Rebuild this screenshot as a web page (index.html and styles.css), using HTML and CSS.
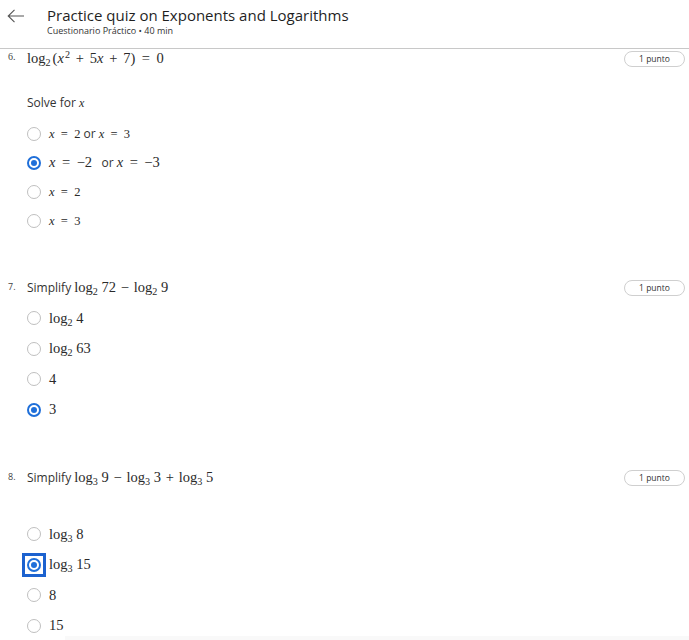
FILE: index.html
```html
<!DOCTYPE html>
<html lang="es">
<head>
<meta charset="utf-8">
<title>Practice quiz on Exponents and Logarithms</title>
<link rel="stylesheet" href="styles.css">
</head>
<body>
<header class="top">
  <button class="back" aria-label="Volver">
    <svg width="18" height="14" viewBox="0 0 18 14"><path d="M17 7H1.2M7.5 0.8L1.2 7l6.3 6.2" fill="none" stroke="#555" stroke-width="1.1"/></svg>
  </button>
  <div class="titles">
    <h1 class="title">Practice quiz on Exponents and Logarithms</h1>
    <div class="sub">Cuestionario Práctico • 40 min</div>
  </div>
</header>

<main class="quiz">
  <section class="q q6">
    <div class="qhead">
      <span class="num serifnum">6.</span>
      <span class="prompt m big">log<sub>2</sub><span class="thin"></span>(<i>x</i><sup>2</sup><span class="bin">+</span>5<i>x</i><span class="bin">+</span>7)<span class="rel">=</span>0</span>
      <span class="pts">1 punto</span>
    </div>
    <div class="solve">Solve for <i class="m">x</i></div>
    <div class="opts r29">
      <label class="opt"><span class="radio"></span><span class="lbl"><span class="m sm"><i>x</i><span class="rel">=</span>2</span> or <span class="m sm"><i>x</i><span class="rel">=</span>3</span></span></label>
      <label class="opt"><span class="radio on"></span><span class="lbl"><span class="m md"><i>x</i><span class="rel">=</span>−2</span>&nbsp;&nbsp; or <span class="m md"><i>x</i><span class="rel">=</span>−3</span></span></label>
      <label class="opt"><span class="radio"></span><span class="lbl"><span class="m sm"><i>x</i><span class="rel">=</span>2</span></span></label>
      <label class="opt"><span class="radio"></span><span class="lbl"><span class="m sm"><i>x</i><span class="rel">=</span>3</span></span></label>
    </div>
  </section>

  <section class="q q7">
    <div class="qhead">
      <span class="num">7.</span>
      <span class="prompt">Simplify <span class="m big">log<sub>2</sub> 72<span class="bin">−</span>log<sub>2</sub> 9</span></span>
      <span class="pts">1 punto</span>
    </div>
    <div class="opts r30">
      <label class="opt"><span class="radio"></span><span class="lbl m big">log<sub>2</sub> 4</span></label>
      <label class="opt"><span class="radio"></span><span class="lbl m big">log<sub>2</sub> 63</span></label>
      <label class="opt"><span class="radio"></span><span class="lbl m big">4</span></label>
      <label class="opt"><span class="radio on"></span><span class="lbl m big">3</span></label>
    </div>
  </section>

  <section class="q q8">
    <div class="qhead">
      <span class="num">8.</span>
      <span class="prompt">Simplify <span class="m big">log<sub>3</sub> 9<span class="bin">−</span>log<sub>3</sub> 3<span class="bin">+</span>log<sub>3</sub> 5</span></span>
      <span class="pts">1 punto</span>
    </div>
    <div class="opts r30">
      <label class="opt"><span class="radio"></span><span class="lbl m big">log<sub>3</sub> 8</span></label>
      <label class="opt"><span class="focus"><span class="radio on"></span></span><span class="lbl m big">log<sub>3</sub> 15</span></label>
      <label class="opt"><span class="radio"></span><span class="lbl m big">8</span></label>
      <label class="opt"><span class="radio"></span><span class="lbl m big">15</span></label>
    </div>
  </section>
</main>
<div class="footshade"></div>
</body>
</html>
```

FILE: styles.css
```css
* { box-sizing: border-box; }
html, body { margin: 0; padding: 0; background: #fff; }
body {
  font-family: "Open Sans", "Liberation Sans", sans-serif;
  color: #333;
  width: 689px;
  height: 640px;
  overflow: hidden;
}

.top {
  height: 49px;
  border-bottom: 1px solid #c8c8c8;
  display: flex;
  align-items: flex-start;
}
.back {
  border: 0;
  background: none;
  padding: 0;
  margin: 9px 0 0 7px;
  width: 18px;
  height: 14px;
  display: flex;
}
.titles { margin-left: 22px; padding-top: 5px; }
.title {
  margin: 0;
  font-size: 15px;
  line-height: 20px;
  font-weight: 400;
  color: #1f1f1f;
}
.sub {
  font-size: 9px;
  line-height: 12px;
  color: #333;
  margin-top: 0;
}

.quiz { padding: 0 4px 0 0; }

.qhead {
  height: 17px;
  display: flex;
  align-items: center;
}
.num {
  width: 27px;
  padding-left: 8px;
  font-size: 9px;
  color: #444;
  align-self: flex-start;
  padding-top: 1px;
}
.serifnum { font-family: "Liberation Serif", serif; font-size: 10px; }
.prompt { flex: 1; font-size: 12px; color: #333; }
.pts {
  width: 61px;
  height: 16px;
  border: 1px solid #cfcfcf;
  border-radius: 8px;
  font-size: 8.5px;
  line-height: 14px;
  text-align: center;
  color: #333;
}

.q6 { padding-top: 1px; }
.q7 { margin-top: 44px; }
.q8 { margin-top: 44px; }

.solve {
  margin: 29px 0 0 27px;
  height: 14px;
  line-height: 14px;
  font-size: 12px;
}
.q6 .opts { margin-top: 9px; }
.q7 .opts { margin-top: 7px; }
.q8 .opts { margin-top: 33px; }

.opt {
  display: flex;
  align-items: center;
  padding-left: 27px;
  font-size: 12px;
  color: #333;
}
.r29 .opt { height: 29px; }
.r30 .opt { height: 30.5px; }

.radio {
  width: 14px;
  height: 14px;
  border-radius: 50%;
  border: 1.5px solid #bfbfbf;
  background: #fff;
  flex: none;
  margin-right: 8px;
  position: relative;
}
.radio.on { border: 2px solid #1f6fd9; }
.radio.on::after {
  content: "";
  position: absolute;
  left: 2px; top: 2px;
  width: 6px; height: 6px;
  border-radius: 50%;
  background: #1f6fd9;
}
.focus {
  flex: none;
  width: 24px;
  height: 24px;
  margin-left: -5px;
  margin-right: 3px;
  border: 3px solid #1c62cf;
  display: flex;
  align-items: center;
  justify-content: center;
}
.focus .radio { margin-right: 0; }

.m {
  font-family: "Liberation Serif", "DejaVu Serif", serif;
  color: #2a2a2a;
}
.m i { font-style: italic; }
.big { font-size: 14.5px; }
.md { font-size: 14.5px; }
.sm { font-size: 12.5px; }
.m sub, .m sup { font-size: 0.7em; line-height: 0; }
.m sub { vertical-align: -0.25em; }
.m sup { vertical-align: 0.45em; margin-left: 1px; }
.thin { display: inline-block; width: 2px; }
.bin { margin: 0 0.33em; }
.q6 .bin { margin: 0 0.4em; }
.rel { margin: 0 0.45em; }
.sm .rel { margin: 0 0.5em; }
.md .rel { margin: 0 0.45em; }
.lbl { white-space: nowrap; }

.footshade {
  position: fixed;
  left: 65px; right: 0; bottom: 0;
  height: 4px;
  background: #f9f9f9;
}
```
